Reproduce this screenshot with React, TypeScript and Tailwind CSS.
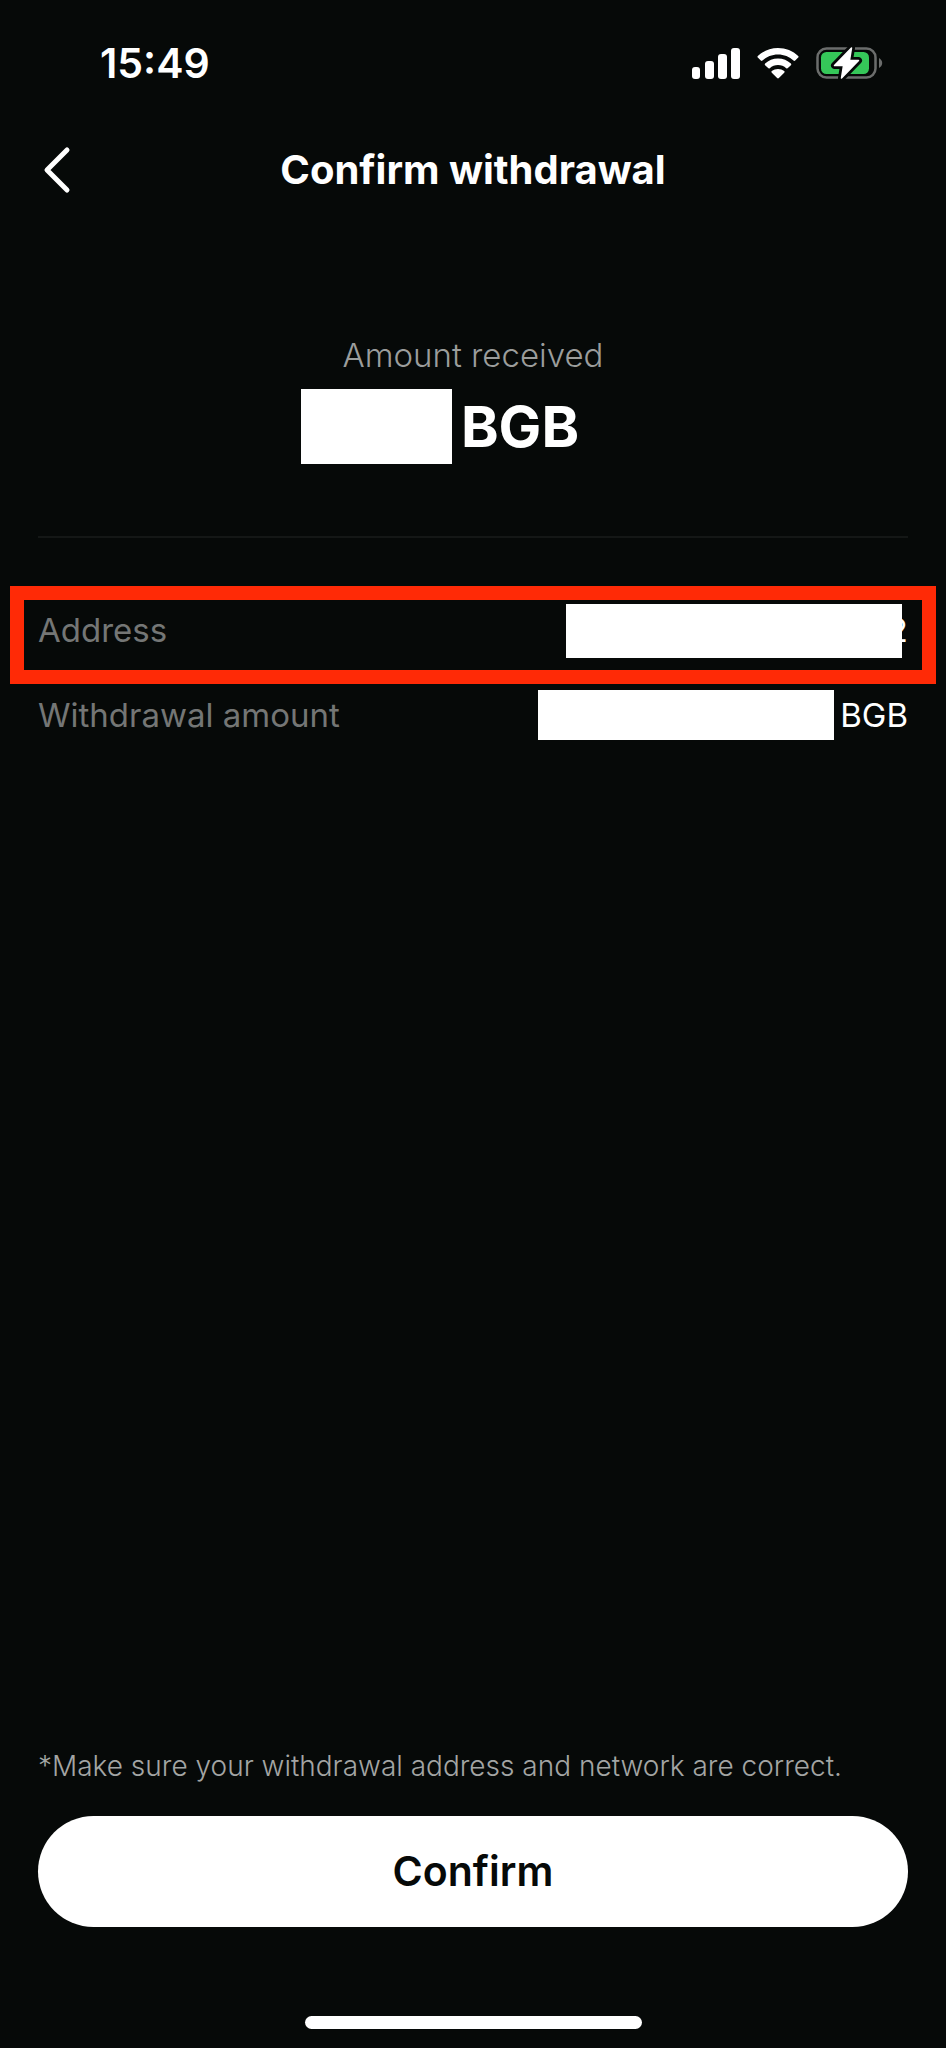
import React from "react";

const StatusBar = () => {
  return (
    <div className="flex h-[126px] items-center justify-between pl-[100px] pr-[63px]">
      <span className="text-[41px] leading-[50px] font-semibold">15:49</span>
      <div className="flex h-8 items-center gap-[17px]">
        <svg width="48" height="32" viewBox="0 0 48 32" fill="white">
          <rect x="0" y="20" width="8" height="12" rx="3" />
          <rect x="13" y="14" width="9" height="18" rx="3" />
          <rect x="26" y="7" width="9" height="25" rx="3" />
          <rect x="39" y="1" width="9" height="31" rx="3" />
        </svg>
        <svg width="42" height="32" viewBox="0 0 42 32" fill="white">
          <path d="M21 1C28.8 1 35.900 4 41.200 8.900C41.700 9.400 41.700 10.100 41.200 10.600L38.200 13.500C37.700 14 37 14 36.500 13.600C32.400 9.900 27 7.600 21 7.600S9.600 9.900 5.500 13.600C5 14 4.300 14 3.800 13.500L.8 10.600C.3 10.100.3 9.400.8 8.900C6.100 4 13.200 1 21 1Z" />
          <path d="M21 11.500C26 11.500 30.500 13.400 33.900 16.500C34.400 17 34.400 17.700 33.900 18.200L30.900 21.100C30.400 21.600 29.800 21.600 29.200 21.200C27 19.300 24.100 18.100 21 18.100S15 19.300 12.800 21.200C12.200 21.600 11.600 21.600 11.100 21.100L8.100 18.200C7.600 17.700 7.600 17 8.100 16.500C11.500 13.400 16 11.500 21 11.500Z" />
          <path d="M21 22C23.400 22 25.500 22.800 27.200 24.100C27.700 24.500 27.700 25.200 27.200 25.700L21.900 31C21.400 31.500 20.600 31.500 20.100 31L14.800 25.700C14.300 25.200 14.300 24.500 14.800 24.100C16.500 22.800 18.600 22 21 22Z" />
        </svg>
        <svg width="67" height="34" viewBox="0 0 67 34">
          <rect
            x="1.500"
            y="2.500"
            width="58"
            height="29"
            rx="9"
            fill="none"
            stroke="#6b6d6c"
            strokeWidth="2.500"
          />
          <path d="M63 12C65 13 66.200 15 66.200 17S65 21 63 22Z" fill="#6b6d6c" />
          <rect x="5" y="6" width="48" height="22" rx="5.500" fill="#35c759" />
          <path
            d="M35.500 2L18.500 19.500H27.500L25.500 32L42.500 14.500H33.500Z"
            fill="white"
            stroke="#060908"
            strokeWidth="7"
            strokeLinejoin="round"
          />
          <path
            d="M35.500 2L18.500 19.500H27.500L25.500 32L42.500 14.500H33.500Z"
            fill="white"
            stroke="white"
            strokeWidth="1.500"
            strokeLinejoin="round"
          />
        </svg>
      </div>
    </div>
  );
};

const Header = () => {
  return (
    <header className="grid h-[88px] grid-cols-[48px_1fr_48px] items-center px-[38px]">
      <button type="button" aria-label="Back">
        <svg width="36" height="48" viewBox="0 0 36 48" fill="none">
          <path
            d="M29 4L9 24L29 44"
            stroke="white"
            strokeWidth="5"
            strokeLinecap="round"
            strokeLinejoin="round"
          />
        </svg>
      </button>
      <h1 className="text-center text-[40px] leading-[50px] font-bold">
        Confirm withdrawal
      </h1>
    </header>
  );
};

const App = () => {
  return (
    <div className="flex min-h-screen flex-col bg-[#060908] font-['Inter','Liberation_Sans',sans-serif] text-white">
      <StatusBar />
      <Header />

      <main className="px-[38px] pt-[121px]">
        <p className="text-center text-[33px] leading-[40px] font-light text-[#9b9d9c]">
          Amount received
        </p>
        <div className="mt-[14px] flex items-center justify-center gap-[9px] pr-[66px]">
          <span className="h-[75px] w-[151px] bg-white" />
          <span className="text-[57px] leading-[75px] font-bold">BGB</span>
        </div>

        <hr className="mt-[72px] border-t-2 border-[#141716]" />

        <dl className="mt-12 text-[33px] leading-[50px]">
          <div className="-mx-7 flex h-[98px] items-start justify-between border-[14px] border-[#ff2a06] px-[14px] pt-1">
            <dt className="leading-[52px] text-[#747675]">Address</dt>
            <dd className="relative h-[54px] w-[342px] text-right leading-[52px]">
              2
              <span className="absolute inset-y-0 left-0 w-[336px] bg-white" />
            </dd>
          </div>
          <div className="mt-[6px] flex items-center justify-between">
            <dt className="leading-[48px] text-[#747675]">Withdrawal amount</dt>
            <dd className="flex items-center gap-[6px] leading-[48px]">
              <span className="h-[50px] w-[296px] bg-white" />
              BGB
            </dd>
          </div>
        </dl>
      </main>

      <footer className="mt-auto px-[38px] pb-[19px]">
        <p className="text-[28px] leading-[40px] font-light text-[#a3a5a4]">
          *Make sure your withdrawal address and network are correct.
        </p>
        <button
          type="button"
          className="mt-[30px] h-[111px] w-full rounded-full bg-white text-[41px] font-semibold text-[#060908]"
        >
          Confirm
        </button>
        <div className="mx-auto mt-[89px] h-[13px] w-[337px] rounded-full bg-white" />
      </footer>
    </div>
  );
};

export default App;
